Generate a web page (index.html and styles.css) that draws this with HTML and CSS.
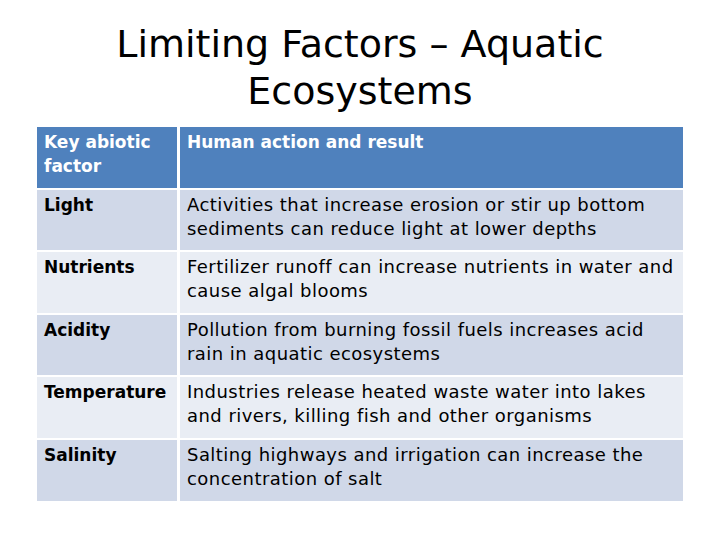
FILE: index.html
```html
<!DOCTYPE html>
<html>
<head>
<meta charset="utf-8">
<link rel="stylesheet" href="styles.css">
</head>
<body>
<h1 class="title">Limiting Factors – Aquatic<br>Ecosystems</h1>
<div class="table">
  <div class="cell head">Key abiotic factor</div>
  <div class="cell head">Human action and result</div>
  <div class="cell key band1">Light</div>
  <div class="cell text band1">Activities that increase erosion or stir up bottom<br>sediments can reduce light at lower depths</div>
  <div class="cell key band2">Nutrients</div>
  <div class="cell text band2">Fertilizer runoff can increase nutrients in water and<br>cause algal blooms</div>
  <div class="cell key band1">Acidity</div>
  <div class="cell text band1">Pollution from burning fossil fuels increases acid<br>rain in aquatic ecosystems</div>
  <div class="cell key band2">Temperature</div>
  <div class="cell text band2">Industries release heated waste water into lakes<br>and rivers, killing fish and other organisms</div>
  <div class="cell key band1">Salinity</div>
  <div class="cell text band1">Salting highways and irrigation can increase the<br>concentration of salt</div>
</div>
</body>
</html>
```
FILE: styles.css
```css
html, body {
  margin: 0;
  padding: 0;
  background: #ffffff;
}
body {
  width: 720px;
  height: 540px;
  overflow: hidden;
  font-family: "DejaVu Sans", "Noto Sans", sans-serif;
  color: #000000;
}
.title {
  margin: 21px 0 0 0;
  font-size: 38px;
  line-height: 47px;
  font-weight: normal;
  text-align: center;
}
.table {
  margin: 12px 0 0 37px;
  width: 646px;
  display: grid;
  grid-template-columns: 140px 503px;
  grid-auto-rows: 60.6px;
  column-gap: 3px;
  row-gap: 2px;
}
.cell {
  padding: 3px 7px 0 7px;
  font-size: 17px;
  line-height: 24px;
  white-space: nowrap;
}
.head:first-child {
  white-space: normal;
}
.text {
  font-size: 18px;
  letter-spacing: 0.45px;
}
.head {
  background: #4f81bd;
  color: #ffffff;
  font-weight: bold;
}
.key {
  font-weight: bold;
}
.band1 {
  background: #d0d8e8;
}
.band2 {
  background: #e9edf4;
}
```
